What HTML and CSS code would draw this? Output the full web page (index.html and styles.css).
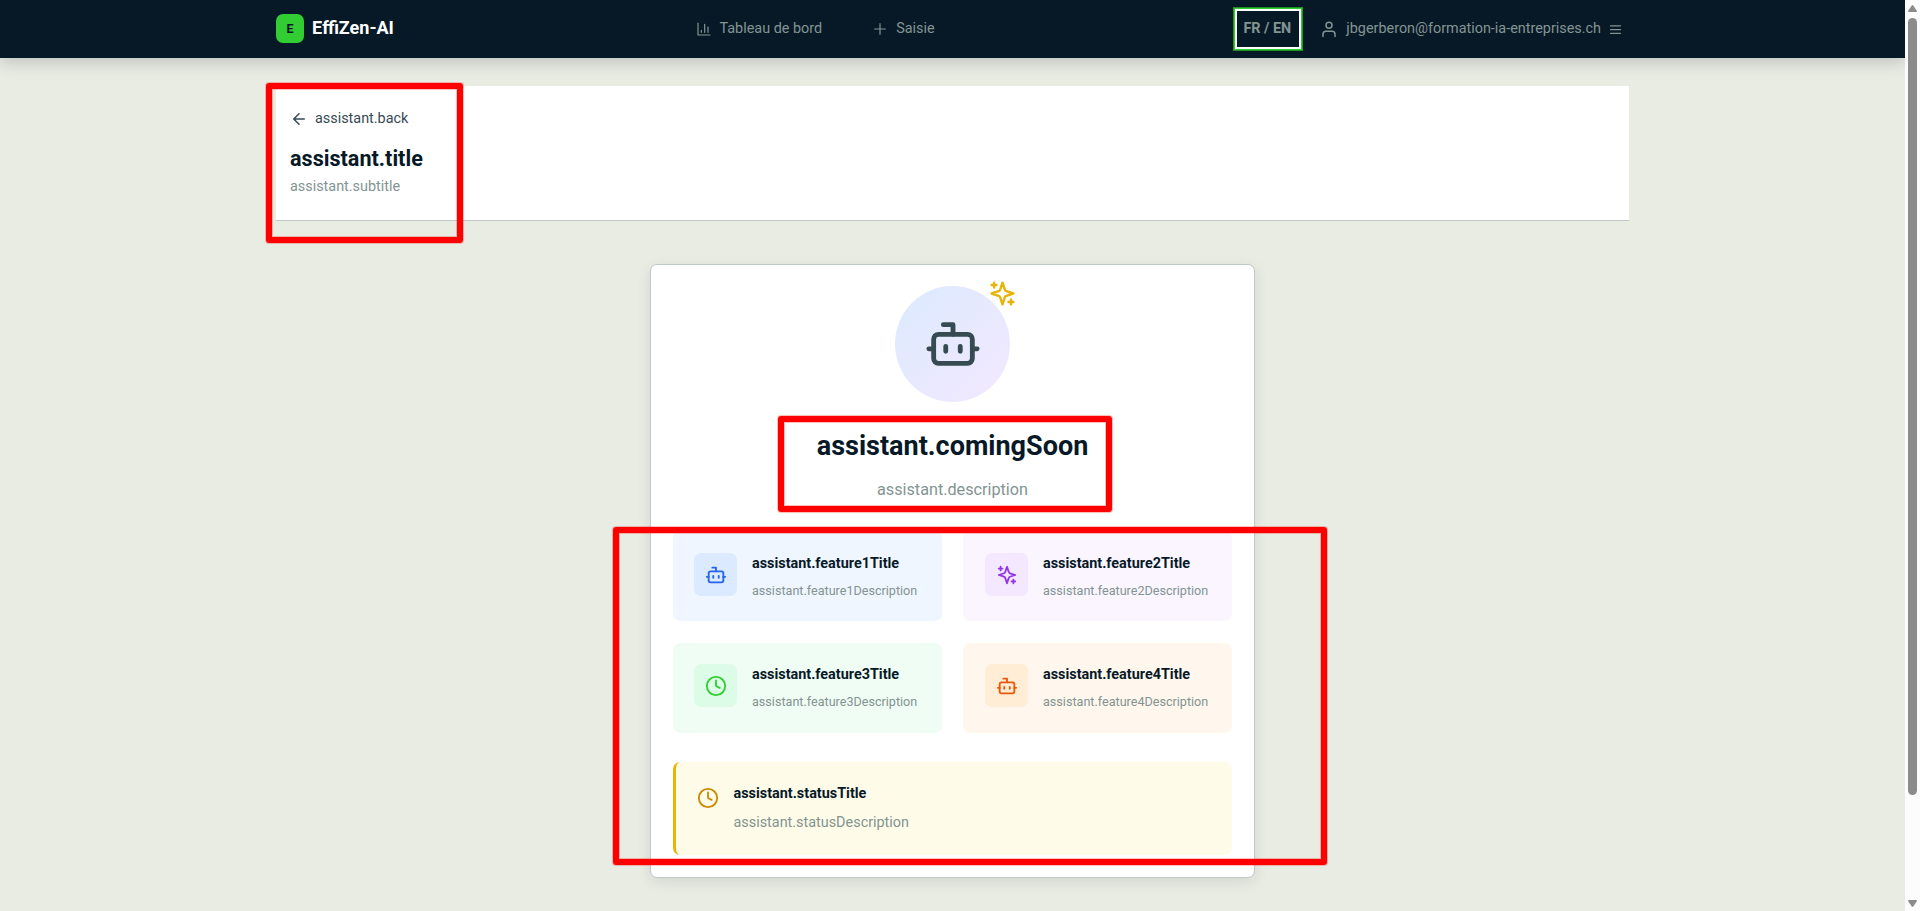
FILE: index.html
```html
<!DOCTYPE html>
<html lang="fr">
<head>
<meta charset="utf-8">
<title>EffiZen-AI</title>
<link rel="stylesheet" href="styles.css">
</head>
<body>
<svg width="0" height="0" class="defs">
  <symbol id="bot" viewBox="0 0 24 24"><path d="M12 8V4H8"/><rect width="16" height="12" x="4" y="8" rx="2"/><path d="M2 14h2M20 14h2M15 13v2M9 13v2"/></symbol>
  <symbol id="sparkles" viewBox="0 0 24 24"><path d="m12 3-1.9 5.8a2 2 0 0 1-1.287 1.288L3 12l5.8 1.9a2 2 0 0 1 1.288 1.287L12 21l1.9-5.8a2 2 0 0 1 1.287-1.288L21 12l-5.8-1.9a2 2 0 0 1-1.288-1.287ZM5 3v4M19 17v4M3 5h4M17 19h4"/></symbol>
  <symbol id="clock" viewBox="0 0 24 24"><circle cx="12" cy="12" r="10"/><path d="M12 6v6l4 2"/></symbol>
  <symbol id="back" viewBox="0 0 24 24"><path d="m12 19-7-7 7-7M19 12H5"/></symbol>
</svg>
<div class="window">
  <div class="page">
    <header class="topbar">
      <div class="topbar-inner">
        <div class="brand"><span class="logo">E</span><span class="brand-name">EffiZen-AI</span></div>
        <nav class="nav">
          <a class="nav-item"><svg class="icon i-nav" viewBox="0 0 24 24"><path d="M3 3v18h18M8 17v-3M13 17V5M18 17V9"/></svg><span class="label">Tableau de bord</span></a>
          <a class="nav-item wide"><svg class="icon i-nav" viewBox="0 0 24 24"><path d="M4 12h16M12 4v16"/></svg><span class="label">Saisie</span></a>
        </nav>
        <div class="account">
          <button class="lang">FR / EN</button>
          <div class="user">
            <svg class="icon i-user" viewBox="0 0 24 24"><circle cx="12" cy="7" r="4"/><path d="M20 22v-3a4 4 0 0 0-4-4H8a4 4 0 0 0-4 4v3"/></svg>
            <span class="label">jbgerberon@formation-ia-entreprises.ch</span>
            <svg class="icon i-menu" viewBox="0 0 24 24"><path d="M4 6h16M4 12h16M4 18h16"/></svg>
          </div>
        </div>
      </div>
    </header>
    <main class="main">
      <section class="intro">
        <a class="back"><svg class="icon i-back"><use href="#back"/></svg><span class="label">assistant.back</span></a>
        <h1 class="title">assistant.title</h1>
        <p class="subtitle">assistant.subtitle</p>
      </section>
      <section class="card">
        <div class="hero"><svg class="icon i-hero"><use href="#bot"/></svg><svg class="icon i-spark"><use href="#sparkles"/></svg></div>
        <h2 class="soon">assistant.comingSoon</h2>
        <p class="desc">assistant.description</p>
        <div class="features">
          <article class="feature blue"><span class="tile"><svg class="icon i-tile"><use href="#bot"/></svg></span><div><h3 class="f-title">assistant.feature1Title</h3><p class="f-text">assistant.feature1Description</p></div></article>
          <article class="feature purple"><span class="tile"><svg class="icon i-tile"><use href="#sparkles"/></svg></span><div><h3 class="f-title">assistant.feature2Title</h3><p class="f-text">assistant.feature2Description</p></div></article>
          <article class="feature green"><span class="tile"><svg class="icon i-tile"><use href="#clock"/></svg></span><div><h3 class="f-title">assistant.feature3Title</h3><p class="f-text">assistant.feature3Description</p></div></article>
          <article class="feature orange"><span class="tile"><svg class="icon i-tile"><use href="#bot"/></svg></span><div><h3 class="f-title">assistant.feature4Title</h3><p class="f-text">assistant.feature4Description</p></div></article>
        </div>
        <div class="status"><svg class="icon i-status"><use href="#clock"/></svg><div><h3 class="f-title">assistant.statusTitle</h3><p class="s-text">assistant.statusDescription</p></div></div>
      </section>
    </main>
  </div>
  <div class="scrollbar">
    <svg class="arrow" viewBox="0 0 9 7"><path d="M4.5 0Q5 0 5.4.7L9 6Q9 7 8 7H1Q0 7 0 6L3.6.7Q4 0 4.5 0Z"/></svg>
    <div class="thumb"></div>
    <svg class="arrow down" viewBox="0 0 9 7"><path d="M4.5 0Q5 0 5.4.7L9 6Q9 7 8 7H1Q0 7 0 6L3.6.7Q4 0 4.5 0Z"/></svg>
  </div>
  <div class="mark mark-intro"></div>
  <div class="mark mark-soon"></div>
  <div class="mark mark-features"></div>
</div>
</body>
</html>
```
FILE: styles.css
```css
* { box-sizing: border-box; }
body { margin: 0; font-family: Roboto, "Liberation Sans", sans-serif; font-size: 14.4px; color: #071927; background: #e9ece3; }
h1, h2, h3, p { margin: 0; }
.defs { position: absolute; }
.window { position: relative; display: flex; width: 100%; height: 911px; overflow: hidden; }
.page { flex: 1; background: #e9ece3; overflow: hidden; }
.icon { display: block; flex: none; fill: none; stroke: currentColor; stroke-width: 2; stroke-linecap: round; stroke-linejoin: round; }
.label { padding-bottom: 2px; }

.topbar { height: 58px; background: #071927; color: #839492; box-shadow: 0 4px 16px rgba(7, 25, 39, .2); }
.topbar-inner { width: 1353px; height: 58px; margin: 0 auto; display: grid; grid-template-columns: 420px 1fr auto; align-items: center; }
.brand { display: flex; align-items: center; gap: 8px; padding-bottom: 1px; }
.logo { width: 28px; height: 29px; border-radius: 7px; background: #32cd32; color: #071927; font-size: 12.6px; font-weight: 700; display: flex; align-items: center; justify-content: center; }
.brand-name { padding-bottom: 2px; color: #fff; font-size: 18px; font-weight: 700; }
.nav { display: flex; gap: 50px; }
.nav-item { display: flex; align-items: center; gap: 7.5px; }
.nav-item.wide { gap: 8px; }
.i-nav { width: 16px; height: 16px; stroke-width: 1.8; }
.account { display: flex; align-items: center; padding-right: 6px; gap: 17px; }
.lang { width: 70px; height: 44px; margin: 0; padding: 0 2px 1px 0; border: 0; background: #071927; color: #839492; font: 700 14.4px Roboto, sans-serif; box-shadow: inset 0 0 0 1px #1c951f, inset 0 0 0 2px #32cd32, inset 0 0 0 4px #fff; }
.user { display: flex; align-items: center; gap: 8px; }
.user .i-menu { margin-left: -1px; }
.i-user { width: 18px; height: 18px; }
.i-menu { width: 15px; height: 15px; }

.main { width: 1353px; margin: 28px auto 0; }
.intro { height: 135px; padding: 22px 14px 0; background: #fff; border-bottom: 1px solid #c0c8c8; }
.back { display: flex; align-items: center; gap: 7px; height: 22px; color: #364a52; }
.i-back { width: 18px; height: 18px; }
.title { margin-top: 14px; font-size: 21.6px; line-height: 30px; font-weight: 700; }
.subtitle { margin-top: 3px; line-height: 20px; color: #839492; }

.card { width: 605px; height: 614px; margin: 43px auto 0; padding: 21px 22px; background: #fff; border: 1px solid #c0c8c8; border-radius: 7px; box-shadow: 0 4px 14px rgba(7, 25, 39, .1); text-align: center; }
.hero { position: relative; width: 115px; height: 116px; margin: 0 auto; border-radius: 50%; background: linear-gradient(135deg, #dbeafe, #f3e8ff); color: #364a52; display: flex; align-items: center; justify-content: center; }
.i-hero { width: 58px; height: 58px; }
.i-spark { position: absolute; width: 29px; height: 29px; top: -7px; right: -7px; color: #eab308; }
.soon { margin-top: 26px; font-size: 27px; line-height: 36px; font-weight: 700; }
.desc { margin-top: 13px; font-size: 16.2px; line-height: 26px; color: #839492; }
.features { margin-top: 28px; display: grid; grid-template-columns: 1fr 1fr; gap: 22px 21px; text-align: left; }
.feature { height: 90px; padding: 22px 21px; border-radius: 7px; display: flex; gap: 15px; }
.feature:nth-child(even) { padding-left: 22px; }
.feature:nth-child(n+3) { padding-top: 21px; }
.tile { width: 43px; height: 43px; border-radius: 7px; display: flex; align-items: center; justify-content: center; }
.i-tile, .i-status { width: 22px; height: 22px; }
.f-title { margin-top: 1px; font-size: 14.4px; line-height: 20px; font-weight: 700; color: #071927; }
.f-text { margin-top: 7px; font-size: 12.6px; line-height: 20px; color: #839492; }
.blue { background: #eff6ff; color: #2563eb; } .blue .tile { background: #dbeafe; }
.purple { background: #faf5ff; color: #9333ea; } .purple .tile { background: #f3e8ff; }
.green { background: #f0fdf4; color: #32cd32; } .green .tile { background: #dcfce7; }
.orange { background: #fff7ed; color: #ea580c; } .orange .tile { background: #ffedd5; }
.status { margin-top: 29px; height: 93px; padding: 21px; border-left: 3px solid #eab308; border-radius: 7px; background: #fefce8; color: #ca8a04; display: flex; gap: 14.5px; text-align: left; }
.i-status { margin-top: 4px; }
.s-text { margin-top: 8px; line-height: 22px; color: #839492; }

.scrollbar { width: 15px; background: #fcfcfc; display: flex; flex-direction: column; align-items: center; padding: 5px 0 4px; }
.arrow { width: 9px; height: 7px; fill: #8b8b8b; }
.down { transform: rotate(180deg); margin-top: auto; }
.thumb { width: 9px; height: 777px; margin-top: 6px; border-radius: 5px; background: #8b8b8b; }

/* annotation frames laid over the page */
.mark { position: absolute; border: 6px solid #f00; border-radius: 3px; box-shadow: 0 0 0 1px rgba(255, 0, 0, .25), inset 0 0 0 1px rgba(255, 0, 0, .25); }
.mark-intro { left: 266px; top: 83px; width: 197px; height: 160px; }
.mark-soon { left: 778px; top: 416px; width: 334px; height: 96px; }
.mark-features { left: 613px; top: 527px; width: 714px; height: 338px; }
```
